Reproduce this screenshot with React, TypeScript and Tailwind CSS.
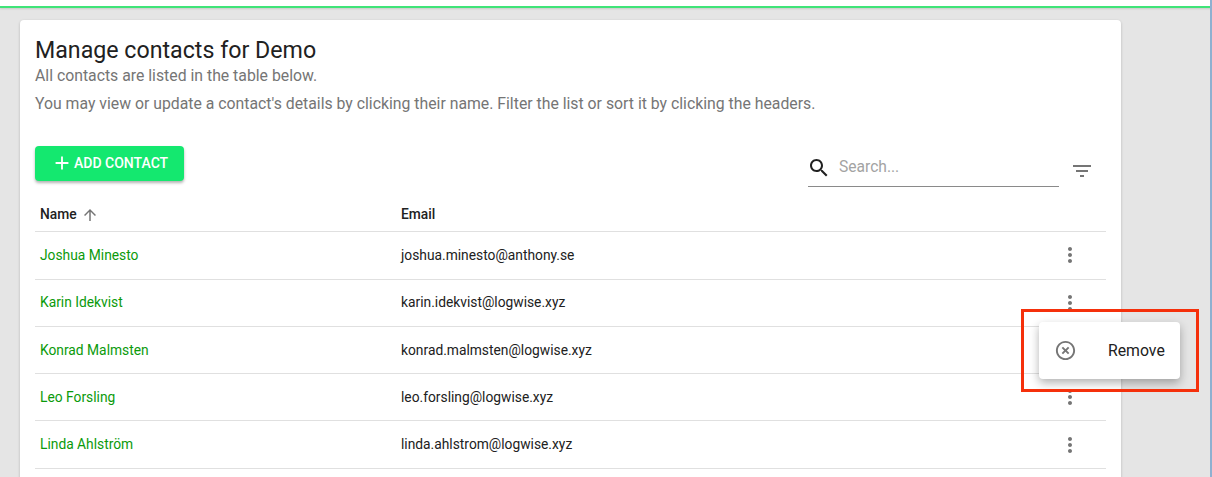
const contacts = [
  { name: "Joshua Minesto", email: "joshua.minesto@anthony.se" },
  { name: "Karin Idekvist", email: "karin.idekvist@logwise.xyz" },
  { name: "Konrad Malmsten", email: "konrad.malmsten@logwise.xyz" },
  { name: "Leo Forsling", email: "leo.forsling@logwise.xyz" },
  { name: "Linda Ahlström", email: "linda.ahlstrom@logwise.xyz" },
];

const Icon = ({ d, className }: { d: string; className: string }) => (
  <svg viewBox="0 0 24 24" fill="currentColor" className={className}>
    <path d={d} />
  </svg>
);

const paths = {
  add: "M19 13h-6v6h-2v-6H5v-2h6V5h2v6h6v2z",
  arrowUp: "M4 12l1.41 1.41L11 7.83V20h2V7.83l5.58 5.59L20 12l-8-8-8 8z",
  search:
    "M15.5 14h-.79l-.28-.27C15.41 12.59 16 11.11 16 9.5 16 5.91 13.09 3 9.5 3S3 5.91 3 9.5 5.91 16 9.5 16c1.61 0 3.09-.59 4.23-1.57l.27.28v.79l5 4.99L20.49 19l-4.99-5zm-6 0C7.01 14 5 11.99 5 9.5S7.01 5 9.5 5 14 7.01 14 9.5 11.99 14 9.5 14z",
  filter: "M10 18h4v-2h-4v2zM3 6v2h18V6H3zm3 7h12v-2H6v2z",
  more: "M12 8c1.1 0 2-.9 2-2s-.9-2-2-2-2 .9-2 2 .9 2 2 2zm0 2c-1.1 0-2 .9-2 2s.9 2 2 2 2-.9 2-2-.9-2-2-2zm0 6c-1.1 0-2 .9-2 2s.9 2 2 2 2-.9 2-2-.9-2-2-2z",
  remove:
    "M14.59 8L12 10.59 9.41 8 8 9.41 10.59 12 8 14.59 9.41 16 12 13.41 14.59 16 16 14.59 13.41 12 16 9.41 14.59 8zM12 2C6.47 2 2 6.47 2 12s4.47 10 10 10 10-4.47 10-10S17.53 2 12 2zm0 18c-4.41 0-8-3.59-8-8s3.59-8 8-8 8 3.59 8 8-3.59 8-8 8z",
};

export default function App() {
  return (
    <div className="relative h-[477px] w-[1212px] overflow-hidden bg-[#e5e5e5] font-['Roboto',sans-serif]">
      <div className="h-[7.5px] border-b-2 border-[#3fe478] bg-white shadow-[0_1px_2px_rgba(0,0,0,0.12)]" />

      <div className="ml-5 mt-[12.5px] h-[600px] w-[1101px] rounded-[4px] bg-white px-[15px] pt-[17px] shadow-[0_1px_3px_rgba(0,0,0,0.2)]">
        <h1 className="text-[23.2px] leading-[27px] text-[#212121]">Manage contacts for Demo</h1>
        <p className="mt-[2px] text-[15.8px] leading-[20px] text-[#757575]">All contacts are listed in the table below.</p>
        <p className="mt-2 text-[15.8px] leading-[20px] text-[#757575]">
          You may view or update a contact's details by clicking their name. Filter the list or sort it by clicking the headers.
        </p>

        <div className="mt-8 flex h-[52px] items-start justify-between">
          <button className="flex h-[35px] w-[149px] items-center rounded-[4px] bg-[#14e86f] pb-[1px] pl-[16px] text-[14px] font-medium text-white shadow-[0_2px_3px_rgba(0,0,0,0.3)]">
            <Icon d={paths.add} className="h-[22px] w-[22px]" />
            <span className="ml-[1px]">ADD CONTACT</span>
          </button>
          <div className="mr-[9px] flex items-start">
            <div className="mt-[1px] flex h-[40px] w-[251px] items-center border-b border-[#8a8a8a] pt-[2px]">
              <Icon d={paths.search} className="ml-[-1px] h-6 w-6 text-[#212121]" />
              <span className="ml-[8px] text-[15.6px] text-[#a3a3a3]">Search...</span>
            </div>
            <Icon d={paths.filter} className="ml-[11px] mr-[3px] mt-[13px] h-6 w-6 text-[#757575]" />
          </div>
        </div>

        <div className="flex h-[34.3px] items-center border-b border-[#e0e0e0] text-[13.8px] font-medium text-[#212121]">
          <div className="flex w-[366px] items-center pl-[5px]">
            Name
            <Icon d={paths.arrowUp} className="ml-[4px] h-[18px] w-[18px] text-[#757575]" />
          </div>
          <div>Email</div>
        </div>

        {contacts.map((c) => (
          <div key={c.name} className="flex h-[47.3px] items-center border-b border-[#e0e0e0] text-[13.8px]">
            <div className="w-[366px] pl-[5px] text-[#0b9a0b]">{c.name}</div>
            <div className="flex-1 text-[#212121]">{c.email}</div>
            <Icon d={paths.more} className="mr-6 h-6 w-6 text-[#757575]" />
          </div>
        ))}
      </div>

      <div className="absolute left-[1039px] top-[322px] flex h-[57px] w-[141px] items-center rounded-[4px] bg-white shadow-[0_4px_10px_rgba(0,0,0,0.3)]">
        <Icon d={paths.remove} className="ml-[15px] h-[23px] w-[23px] text-[#757575]" />
        <span className="ml-[31px] text-[15.8px] text-[#212121]">Remove</span>
      </div>
      <div className="absolute left-[1021px] top-[309px] h-[83px] w-[178px] border-[3px] border-[#f5300b]" />
      <div className="absolute right-0 top-0 h-full w-[2px] bg-[#8fb0d0]" />
    </div>
  );
}
